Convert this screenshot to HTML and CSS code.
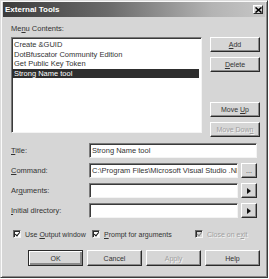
FILE: index.html
```html
<!DOCTYPE html>
<html lang="en">
<head>
  <meta charset="UTF-8">
  <title>External Tools</title>
  <link rel="stylesheet" href="styles.css">
</head>
<body>
  <div class="dialog">
    <div class="titlebar">
      <span class="title">External Tools</span>
      <span class="close">
        <svg width="7" height="6" viewBox="0 0 7 6"><path d="M0.5 0.5 L6.5 5.5 M6.5 0.5 L0.5 5.5" stroke="#000" stroke-width="1.6"/></svg>
      </span>
    </div>

    <div class="content">
      <div class="label-top">Me<u>n</u>u Contents:</div>
      <div class="list-row">
        <ul class="listbox">
          <li>Create &amp;GUID</li>
          <li>DotBfuscator Community Edition</li>
          <li>Get Public Key Token</li>
          <li class="selected">Strong Name tool</li>
        </ul>
        <div class="side-buttons">
          <button class="btn"><u>A</u>dd</button>
          <button class="btn"><u>D</u>elete</button>
          <div class="spacer"></div>
          <button class="btn">Move <u>U</u>p</button>
          <button class="btn" disabled>Move Dow<u>n</u></button>
        </div>
      </div>

      <div class="fields">
        <label><u>T</u>itle:</label>
        <input class="field wide" value="Strong Name tool">
        <label><u>C</u>ommand:</label>
        <input class="field" value="C:\Program Files\Microsoft Visual Studio .NET">
        <button class="btn small">...</button>
        <label>Ar<u>g</u>uments:</label>
        <input class="field" value="">
        <button class="btn small"><span class="arrow"></span></button>
        <label><u>I</u>nitial directory:</label>
        <input class="field" value="">
        <button class="btn small"><span class="arrow"></span></button>
      </div>

      <div class="checks">
        <div class="check"><span class="box checked"></span><span>Use <u>O</u>utput window</span></div>
        <div class="check"><span class="box checked"></span><span><u>P</u>rompt for arguments</span></div>
        <div class="check disabled"><span class="box checked"></span><span>Close on e<u>x</u>it</span></div>
      </div>

      <div class="bottom-buttons">
        <button class="btn default">OK</button>
        <button class="btn">Cancel</button>
        <button class="btn" disabled>Apply</button>
        <button class="btn">Help</button>
      </div>
    </div>
  </div>
</body>
</html>
```

FILE: styles.css
```css
body {
  margin: 0;
  padding: 0;
  background-color: #ffffff;
  font-family: "Liberation Sans", Arial, sans-serif;
  font-size: 7.5px;
  color: #333333;
}
.dialog {
  width: 268px;
  height: 278px;
  box-sizing: border-box;
  background-color: #d6d6d6;
  border: 1px solid;
  border-color: #dcdcdc #3a3a3a #3a3a3a #dcdcdc;
  box-shadow: inset 1px 1px 0 #fafafa, inset -1px -1px 0 #8a8a8a;
  padding: 1px 2px 0 2px;
}
.titlebar {
  height: 15px;
  background: linear-gradient(to right, #3c3c3c 0%, #6a6a6a 40%, #b4b4b4 80%, #c6c6c6 100%);
  display: flex;
  align-items: center;
  justify-content: space-between;
  padding: 0 2px 0 2px;
}
.title {
  color: #ffffff;
  font-weight: bold;
  font-size: 8px;
}
.close {
  width: 10px;
  height: 9px;
  box-sizing: border-box;
  background-color: #d6d6d6;
  border: 1px solid;
  border-color: #ffffff #2a2a2a #2a2a2a #ffffff;
  display: flex;
  align-items: center;
  justify-content: center;
}
.content {
  padding: 0 0 0 8px;
}
.label-top {
  margin-top: 6px;
  height: 14px;
  line-height: 12px;
}
.list-row {
  display: flex;
  gap: 8px;
}
.listbox {
  margin: 0;
  padding: 2px 0 0 0;
  list-style: none;
  width: 191px;
  height: 96px;
  box-sizing: border-box;
  background-color: #ffffff;
  border: 1px solid;
  border-color: #7a7a7a #f4f4f4 #f4f4f4 #7a7a7a;
  box-shadow: inset 1px 1px 0 #3a3a3a;
}
.listbox li {
  height: 9.5px;
  line-height: 9.5px;
  padding-left: 2px;
  margin-right: 2px;
  white-space: nowrap;
}
.listbox li.selected {
  background-color: #2e2e2e;
  color: #ffffff;
}
.side-buttons {
  display: flex;
  flex-direction: column;
  gap: 5px;
}
.side-buttons .btn {
  height: 15px;
}
.spacer {
  height: 20px;
}
.btn {
  width: 50px;
  height: 16px;
  padding: 0;
  font-family: "Liberation Sans", Arial, sans-serif;
  font-size: 7px;
  color: #333333;
  white-space: nowrap;
  background-color: #d6d6d6;
  border: 1px solid;
  border-color: #ffffff #2a2a2a #2a2a2a #ffffff;
  box-shadow: inset -1px -1px 0 #8a8a8a;
}
.btn:disabled {
  color: #a0a0a0;
  text-shadow: 1px 1px 0 #f4f4f4;
}
.btn.default {
  border: 1px solid #2a2a2a;
  box-shadow: inset 1px 1px 0 #ffffff, inset -2px -2px 0 #8a8a8a;
}
.fields {
  margin-top: 6px;
  display: grid;
  grid-template-columns: 78px 149px 19px;
  grid-auto-rows: 15px;
  row-gap: 5px;
  align-items: center;
}
.fields label {
  line-height: 15px;
}
.field {
  height: 15px;
  box-sizing: border-box;
  width: 100%;
  margin: 0;
  padding: 0 0 0 2px;
  font-family: "Liberation Sans", Arial, sans-serif;
  font-size: 7.5px;
  color: #333333;
  background-color: #ffffff;
  border: 1px solid;
  border-color: #7a7a7a #f4f4f4 #f4f4f4 #7a7a7a;
  box-shadow: inset 1px 1px 0 #3a3a3a;
  outline: none;
}
.field.wide {
  grid-column: 2 / 4;
  width: 168px;
}
.btn.small {
  width: 16px;
  height: 15px;
  justify-self: end;
  display: flex;
  align-items: center;
  justify-content: center;
}
.arrow {
  width: 0;
  height: 0;
  border-left: 4px solid #111111;
  border-top: 3.5px solid transparent;
  border-bottom: 3.5px solid transparent;
}
.checks {
  margin-top: 10px;
  display: flex;
  height: 12px;
  align-items: center;
  padding-left: 2px;
  font-size: 7px;
}
.check {
  display: flex;
  align-items: center;
  gap: 4px;
  white-space: nowrap;
}
.check:nth-child(1) {
  width: 79px;
}
.check:nth-child(2) {
  width: 103px;
}
.check.disabled {
  color: #a0a0a0;
  text-shadow: 1px 1px 0 #f4f4f4;
}
.box {
  width: 8px;
  height: 8px;
  flex: none;
  box-sizing: border-box;
  background-color: #ffffff;
  border: 1px solid;
  border-color: #6a6a6a #f4f4f4 #f4f4f4 #6a6a6a;
  box-shadow: inset 1px 1px 0 #2a2a2a;
  position: relative;
}
.box.checked::after {
  content: "";
  position: absolute;
  left: 1.5px;
  top: 0;
  width: 2px;
  height: 4px;
  border-right: 1.3px solid #111111;
  border-bottom: 1.3px solid #111111;
  transform: rotate(40deg);
}
.check.disabled .box {
  background-color: #d6d6d6;
}
.check.disabled .box.checked::after {
  border-color: #8a8a8a;
}
.bottom-buttons {
  margin-top: 10px;
  display: flex;
  gap: 4px;
  padding-left: 17px;
}
.bottom-buttons .btn {
  width: 55px;
  height: 16px;
}
```
